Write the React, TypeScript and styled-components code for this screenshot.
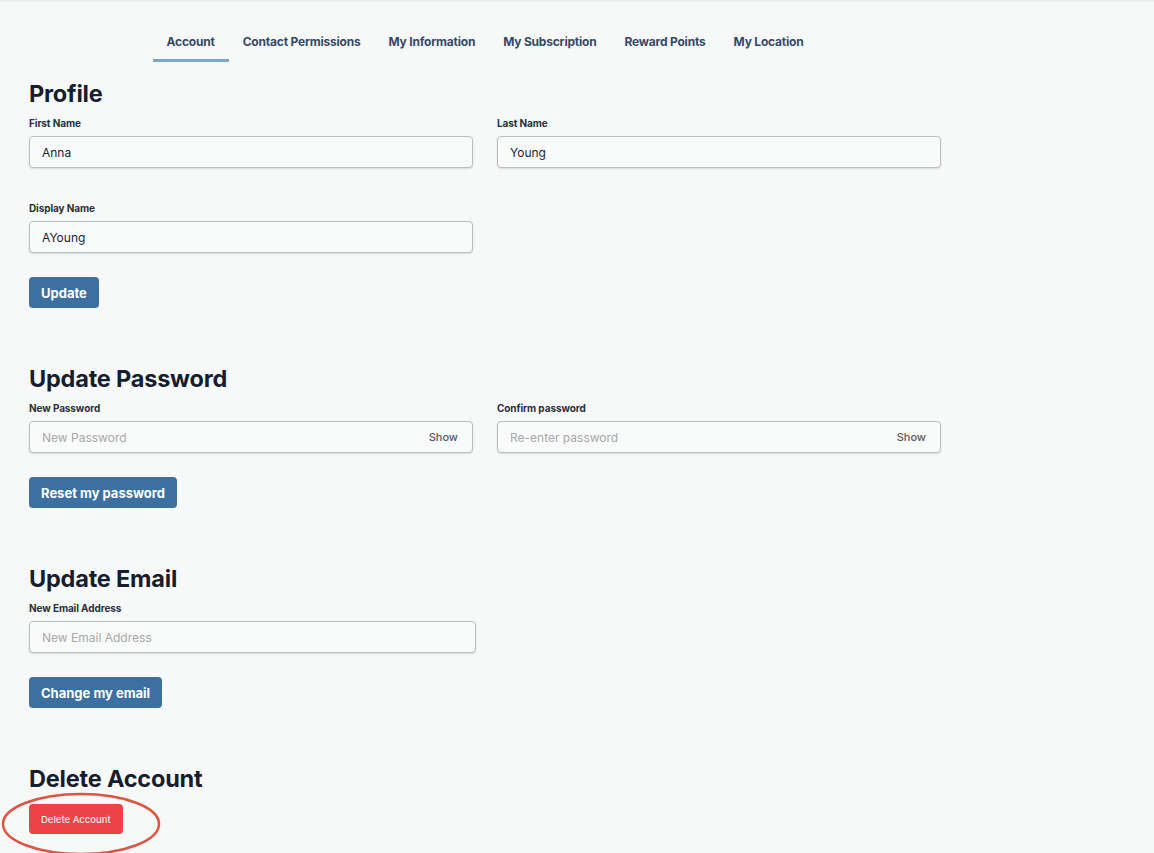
import React from 'react';
import styled, { createGlobalStyle } from 'styled-components';

const GlobalStyle = createGlobalStyle`
  html, body {
    margin: 0;
    padding: 0;
    background: #f7f9f9;
    font-family: Inter, "Noto Sans", Arial, sans-serif;
    color: #1c2333;
  }
  * { box-sizing: border-box; }
`;

const Page = styled.div`
  min-height: 853px;
  border-top: 2px solid #eef0f0;
  padding: 33px 0 40px 29px;
`;

const Content = styled.div`
  width: 912px;
`;

const Nav = styled.nav`
  display: flex;
  justify-content: center;
`;

const Tab = styled.a<{ $active?: boolean }>`
  padding: 0 14px 10px;
  font-size: 12px;
  line-height: 14px;
  font-weight: 700;
  letter-spacing: -0.2px;
  color: #34496a;
  border-bottom: 3px solid ${(p) => (p.$active ? '#7aa6d6' : 'transparent')};
  cursor: pointer;
  white-space: nowrap;
`;

const Section = styled.section`
  position: relative;
  margin-top: 58px;
  &:first-of-type {
    margin-top: 19px;
  }
`;

const Heading = styled.h2`
  margin: 0 0 10px;
  font-size: 23.5px;
  line-height: 26px;
  font-weight: 700;
  color: #171d2e;
  letter-spacing: -0.2px;
`;

const Grid = styled.div`
  display: grid;
  grid-template-columns: 444px 444px;
  column-gap: 24px;
  row-gap: 34px;
  margin-bottom: 24px;
`;

const Field = styled.div<{ $wide?: boolean }>`
  display: flex;
  flex-direction: column;
  gap: 7px;
  width: ${(p) => (p.$wide ? '447px' : 'auto')};
`;

const Label = styled.label`
  font-size: 10px;
  line-height: 12px;
  font-weight: 700;
  letter-spacing: -0.1px;
  color: #2a2f3a;
`;

const InputWrap = styled.div`
  display: flex;
  align-items: center;
  height: 32px;
  padding: 0 14px 0 12px;
  border: 1px solid #bdbdbd;
  border-radius: 4px;
  background: #f9fafa;
  box-shadow: 0 1px 2px rgba(0, 0, 0, 0.12);
`;

const Input = styled.input`
  flex: 1;
  border: none;
  outline: none;
  background: transparent;
  font-family: Inter, "Noto Sans", Arial, sans-serif;
  font-size: 12px;
  color: #1d2230;
  padding: 0;
  &::placeholder {
    color: #a8a8a8;
  }
`;

const Show = styled.span`
  font-size: 11px;
  color: #555a60;
  font-weight: 500;
`;

const Button = styled.button<{ $danger?: boolean }>`
  height: ${(p) => (p.$danger ? '30px' : '31px')};
  padding: 0 12px;
  border: none;
  border-radius: 4px;
  background: ${(p) => (p.$danger ? '#ee4249' : '#3b70a0')};
  color: ${(p) => (p.$danger ? '#fde8ea' : '#ffffff')};
  font-family: Inter, "Noto Sans", Arial, sans-serif;
  font-size: ${(p) => (p.$danger ? '9.5px' : '13px')};
  font-weight: ${(p) => (p.$danger ? 500 : 700)};
  cursor: pointer;
`;

const DeleteHeading = styled(Heading)`
  margin-bottom: 12px;
`;

const Circle = styled.svg`
  position: absolute;
  left: -29px;
  top: 26px;
  pointer-events: none;
`;

const tabs = ['Account', 'Contact Permissions', 'My Information', 'My Subscription', 'Reward Points', 'My Location'];

function TextField({ label, value, placeholder, show, wide }: { label: string; value?: string; placeholder?: string; show?: boolean; wide?: boolean }) {
  return (
    <Field $wide={wide}>
      <Label>{label}</Label>
      <InputWrap>
        <Input defaultValue={value} placeholder={placeholder} type={show ? 'password' : 'text'} />
        {show && <Show>Show</Show>}
      </InputWrap>
    </Field>
  );
}

export default function App() {
  return (
    <>
      <GlobalStyle />
      <Page>
        <Content>
          <Nav>
            {tabs.map((t, i) => (
              <Tab key={t} $active={i === 0}>{t}</Tab>
            ))}
          </Nav>

          <Section>
            <Heading>Profile</Heading>
            <Grid>
              <TextField label="First Name" value="Anna" />
              <TextField label="Last Name" value="Young" />
              <TextField label="Display Name" value="AYoung" />
            </Grid>
            <Button>Update</Button>
          </Section>

          <Section>
            <Heading>Update Password</Heading>
            <Grid>
              <TextField label="New Password" placeholder="New Password" show />
              <TextField label="Confirm password" placeholder="Re-enter password" show />
            </Grid>
            <Button>Reset my password</Button>
          </Section>

          <Section>
            <Heading>Update Email</Heading>
            <Grid>
              <TextField label="New Email Address" placeholder="New Email Address" wide />
            </Grid>
            <Button>Change my email</Button>
          </Section>

          <Section>
            <DeleteHeading>Delete Account</DeleteHeading>
            <Button $danger>Delete Account</Button>
            <Circle width="164" height="66" viewBox="0 0 164 66">
              <ellipse cx="81" cy="32" rx="78" ry="30" fill="none" stroke="#dd5440" strokeWidth="2.5" />
            </Circle>
          </Section>
        </Content>
      </Page>
    </>
  );
}
